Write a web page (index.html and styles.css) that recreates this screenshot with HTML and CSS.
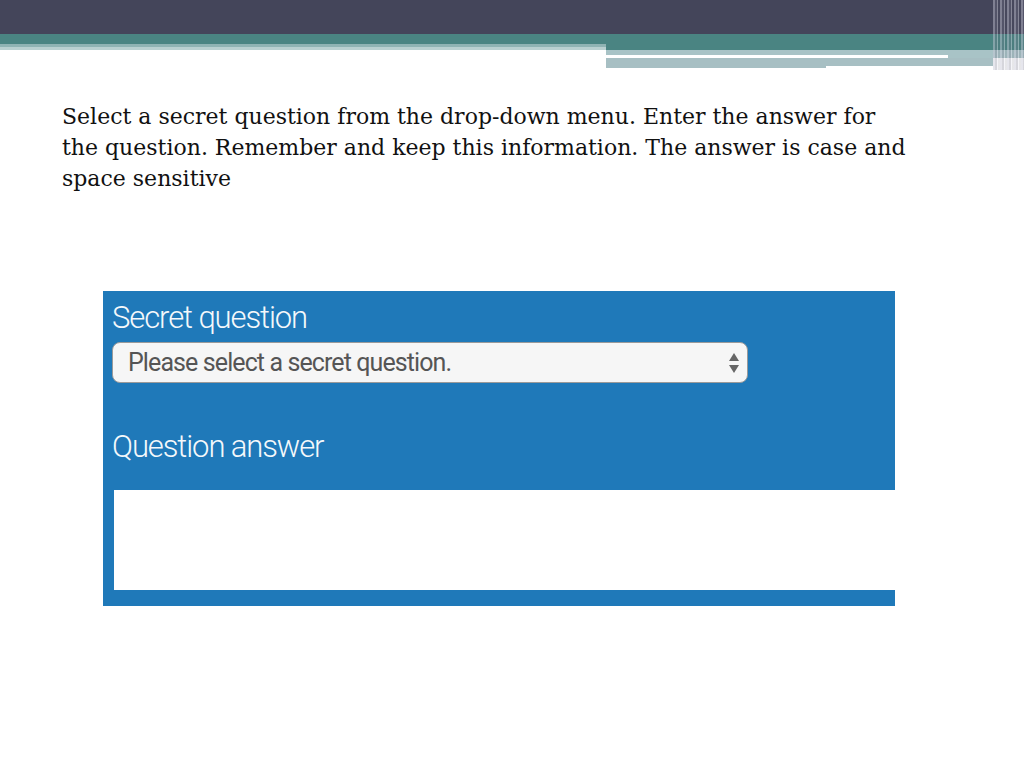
FILE: index.html
```html
<!DOCTYPE html>
<html lang="en">
<head>
    <meta charset="UTF-8">
    <title>Secret question</title>
    <link rel="stylesheet" href="styles.css">
</head>
<body>

    <div class="masthead" aria-hidden="true">
        <div class="mast-dark"></div>
        <div class="mast-bands">
            <div class="band-left">
                <div class="teal"></div>
                <div class="pale-a"></div>
                <div class="pale-b"></div>
            </div>
            <div class="band-right">
                <div class="teal tall"></div>
                <div class="pale-line"></div>
                <div class="white-row">
                    <div class="white-line"></div>
                    <div class="pale-fill"></div>
                </div>
                <div class="grey-row">
                    <div class="grey-long"></div>
                    <div class="grey-short"></div>
                </div>
            </div>
        </div>
        <div class="mast-stripes"></div>
    </div>

    <p class="intro">
        Select a secret question from the drop-down menu. Enter the answer for<br>
        the question. Remember and keep this information. The answer is case and<br>
        space sensitive
    </p>

    <div class="shot">
        <label class="field-label" for="question">Secret question</label>
        <div class="select-box" id="question">
            <span>Please select a secret question.</span>
            <svg class="arrows" width="12" height="22" viewBox="0 0 12 22">
                <path d="M6 1 L11 9 L1 9 Z" fill="#666"/>
                <path d="M1 13 L11 13 L6 21 Z" fill="#666"/>
            </svg>
        </div>
        <label class="field-label answer" for="answer">Question answer</label>
        <div class="answer-box" id="answer"></div>
    </div>

</body>
</html>
```

FILE: styles.css
```css
body {
    margin: 0;
    background: #fff;
    font-family: 'DejaVu Serif', serif;
}

/* title bar stripes */
.masthead {
    position: relative;
    height: 70px;
}

.mast-dark {
    height: 34px;
    background: #44455a;
}

.mast-bands {
    display: flex;
}

.band-left {
    width: 606px;
}

.band-right {
    flex: 1;
}

.teal {
    height: 10px;
    background: #4a8482;
}

.teal.tall {
    height: 16px;
}

.pale-a {
    height: 3px;
    background: #8fb3b3;
}

.pale-b {
    height: 3px;
    background: #b9d0d0;
}

.pale-line {
    height: 5px;
    background: #a8c3c6;
}

.white-row {
    display: flex;
    height: 3px;
}

.white-line {
    width: 342px;
    background: #fff;
}

.pale-fill {
    flex: 1;
    background: #a8c3c6;
}

.grey-row {
    display: flex;
    align-items: flex-start;
}

.grey-long {
    width: 220px;
    height: 10px;
    background: #a7bfc3;
}

.grey-short {
    flex: 1;
    height: 8px;
    background: #a7bfc3;
    margin-right: 31px;
}

.mast-stripes {
    position: absolute;
    top: 0;
    right: 0;
    width: 31px;
    height: 70px;
    background: repeating-linear-gradient(90deg,
        rgba(200, 200, 215, 0.45) 0 2px,
        rgba(120, 120, 140, 0.3) 2px 4px,
        rgba(230, 230, 240, 0.4) 4px 5px,
        rgba(90, 90, 110, 0.15) 5px 7px);
}

.intro {
    margin: 31px 0 0 62px;
    font-size: 22px;
    line-height: 31px;
    color: #111;
}

/* embedded form screenshot */
.shot {
    margin: 97px 0 0 103px;
    width: 792px;
    height: 315px;
    background: #1f79b9;
    box-sizing: border-box;
    padding: 7px 0 0 9px;
    overflow: hidden;
    display: flex;
    flex-direction: column;
    font-family: Roboto, 'Liberation Sans', sans-serif;
}

.field-label {
    color: #f4f8fb;
    font-size: 31px;
    letter-spacing: -1.1px;
    line-height: 40px;
    font-weight: 300;
}

.select-box {
    margin-top: 4px;
    width: 636px;
    height: 41px;
    box-sizing: border-box;
    background: #f6f6f6;
    border: 1px solid #9a9a9a;
    border-radius: 8px;
    display: flex;
    align-items: center;
    justify-content: space-between;
    padding: 0 7px 0 15px;
    color: #555;
    font-size: 25px;
    letter-spacing: -0.9px;
}

.field-label.answer {
    margin-top: 44px;
}

.answer-box {
    margin: 23px 0 0 2px;
    height: 100px;
    background: #fff;
}
```
